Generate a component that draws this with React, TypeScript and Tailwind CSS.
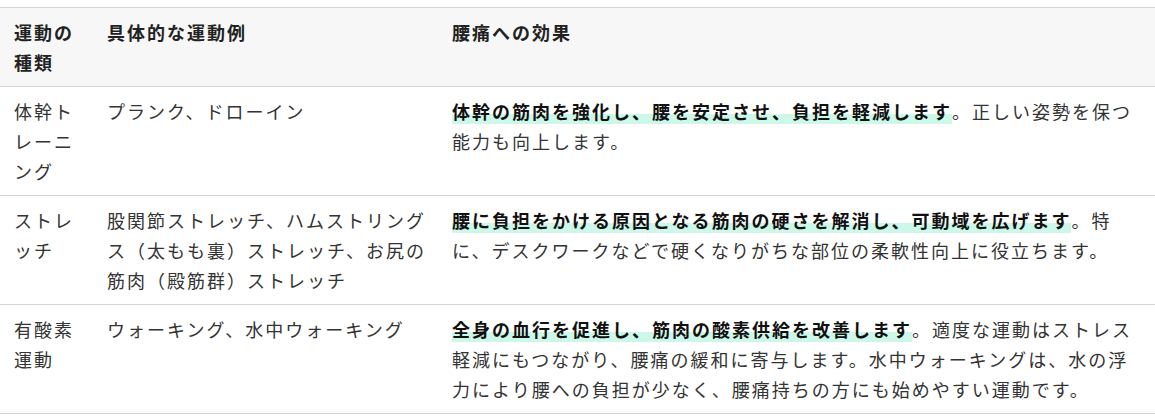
import React from "react";

const hl = "font-bold text-[#111] bg-[linear-gradient(transparent_62%,#cdf7e9_62%)]";

type Row = { kind: string; ex: string; bold: string; rest: string };

const rows: Row[] = [
  {
    kind: "体幹トレーニング",
    ex: "プランク、ドローイン",
    bold: "体幹の筋肉を強化し、腰を安定させ、負担を軽減します",
    rest: "。正しい姿勢を保つ能力も向上します。",
  },
  {
    kind: "ストレッチ",
    ex: "股関節ストレッチ、ハムストリングス（太もも裏）ストレッチ、お尻の筋肉（殿筋群）ストレッチ",
    bold: "腰に負担をかける原因となる筋肉の硬さを解消し、可動域を広げます",
    rest: "。特に、デスクワークなどで硬くなりがちな部位の柔軟性向上に役立ちます。",
  },
  {
    kind: "有酸素運動",
    ex: "ウォーキング、水中ウォーキング",
    bold: "全身の血行を促進し、筋肉の酸素供給を改善します",
    rest: "。適度な運動はストレス軽減にもつながり、腰痛の緩和に寄与します。水中ウォーキングは、水の浮力により腰への負担が少なく、腰痛持ちの方にも始めやすい運動です。",
  },
];

export default function App() {
  return (
    <div
      className="w-[1155px] h-[420px] bg-white pt-[7px] text-[18px] leading-[30px] tracking-[2px] text-[#333]"
      style={{ fontFamily: '"Noto Sans CJK JP", "Noto Sans", sans-serif' }}
    >
      <div className="border-t border-[#d4d4d4]">
        <div className="grid grid-cols-[93px_345px_1fr] bg-[#f7f7f7] border-b border-[#d4d4d4] font-bold text-[#222]">
          <div className="pl-[14px] pr-[8px] py-[9px]">運動の種類</div>
          <div className="pl-[14px] pr-[4px] py-[9px]">具体的な運動例</div>
          <div className="pl-[14px] pr-[14px] py-[9px]">腰痛への効果</div>
        </div>
        {rows.map((r) => (
          <div
            key={r.kind}
            className="grid grid-cols-[93px_345px_1fr] border-b border-[#d4d4d4]"
          >
            <div className="pl-[14px] pr-[8px] py-[9px]">{r.kind}</div>
            <div className="pl-[14px] pr-[4px] py-[9px]">{r.ex}</div>
            <div className="pl-[14px] pr-[14px] py-[9px]">
              <span className={hl}>{r.bold}</span>
              {r.rest}
            </div>
          </div>
        ))}
      </div>
    </div>
  );
}
